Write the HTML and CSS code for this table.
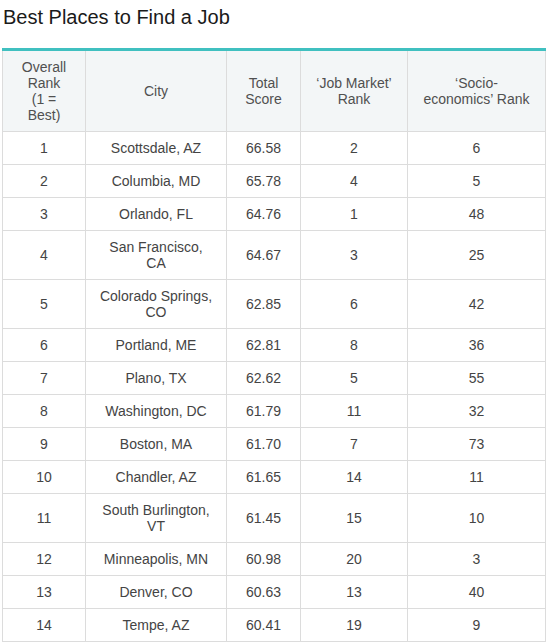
FILE: index.html
```html
<!DOCTYPE html>
<html lang="en">
<head>
    <meta charset="UTF-8">
    <title>Best Places to Find a Job</title>
    <link rel="stylesheet" href="styles.css">
</head>
<body>
    <h2 class="title">Best Places to Find a Job</h2>

    <table class="jobs">
        <colgroup>
            <col class="c-rank">
            <col class="c-city">
            <col class="c-score">
            <col class="c-market">
            <col class="c-socio">
        </colgroup>
        <thead>
            <tr>
                <th>Overall<br>Rank<br>(1 =<br>Best)</th>
                <th>City</th>
                <th>Total<br>Score</th>
                <th>‘Job Market’<br>Rank</th>
                <th>‘Socio-<br>economics’ Rank</th>
            </tr>
        </thead>
        <tbody>
            <tr><td>1</td><td>Scottsdale, AZ</td><td>66.58</td><td>2</td><td>6</td></tr>
            <tr><td>2</td><td>Columbia, MD</td><td>65.78</td><td>4</td><td>5</td></tr>
            <tr><td>3</td><td>Orlando, FL</td><td>64.76</td><td>1</td><td>48</td></tr>
            <tr><td>4</td><td>San Francisco, CA</td><td>64.67</td><td>3</td><td>25</td></tr>
            <tr><td>5</td><td>Colorado Springs, CO</td><td>62.85</td><td>6</td><td>42</td></tr>
            <tr><td>6</td><td>Portland, ME</td><td>62.81</td><td>8</td><td>36</td></tr>
            <tr><td>7</td><td>Plano, TX</td><td>62.62</td><td>5</td><td>55</td></tr>
            <tr><td>8</td><td>Washington, DC</td><td>61.79</td><td>11</td><td>32</td></tr>
            <tr><td>9</td><td>Boston, MA</td><td>61.70</td><td>7</td><td>73</td></tr>
            <tr><td>10</td><td>Chandler, AZ</td><td>61.65</td><td>14</td><td>11</td></tr>
            <tr><td>11</td><td>South Burlington, VT</td><td>61.45</td><td>15</td><td>10</td></tr>
            <tr><td>12</td><td>Minneapolis, MN</td><td>60.98</td><td>20</td><td>3</td></tr>
            <tr><td>13</td><td>Denver, CO</td><td>60.63</td><td>13</td><td>40</td></tr>
            <tr><td>14</td><td>Tempe, AZ</td><td>60.41</td><td>19</td><td>9</td></tr>
        </tbody>
    </table>
</body>
</html>
```

FILE: styles.css
```css
body {
    margin: 0;
    padding: 0 2px;
    background: #fff;
    font-family: 'Liberation Sans', Arial, sans-serif;
    color: #444;
}

.title {
    margin: 0;
    padding: 6px 0 0 1px;
    height: 48px;
    box-sizing: border-box;
    font-size: 20px;
    font-weight: normal;
    line-height: 23px;
    color: #1a1a1a;
}

.jobs {
    width: 543px;
    table-layout: fixed;
    border-collapse: collapse;
    border-top: 3px solid #40c0c0;
    font-size: 14px;
    line-height: 16px;
}

.c-rank { width: 83px; }
.c-city { width: 141px; }
.c-score { width: 74px; }
.c-market { width: 107px; }
.c-socio { width: 138px; }

.jobs th,
.jobs td {
    padding: 8px 12px;
    border: 1px solid #dcdcdc;
    text-align: center;
    vertical-align: middle;
    font-weight: normal;
}

.jobs th {
    background: #f3f6f7;
    color: #505050;
}

.jobs thead tr th {
    border-top: 0;
}
```
